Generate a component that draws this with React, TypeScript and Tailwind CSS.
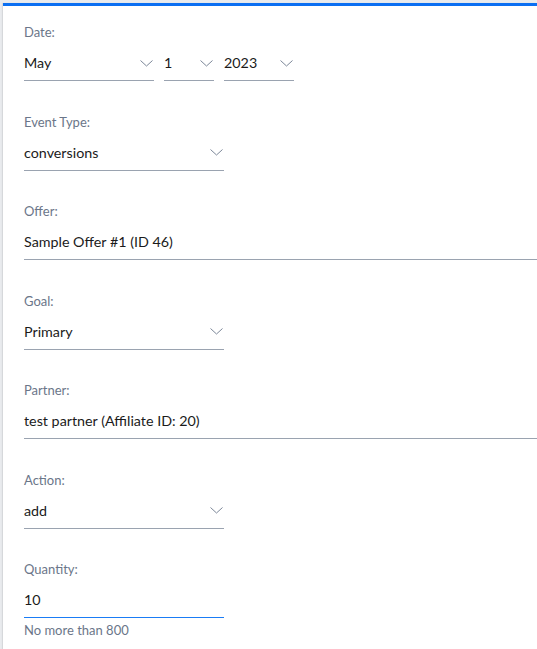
import { ReactNode } from "react";

const Chevron = () => (
  <svg width="13" height="7" viewBox="0 0 13 7" fill="none" className="shrink-0">
    <path d="M0.5 0.5L6.5 6L12.5 0.5" stroke="#7c8798" strokeWidth="1" />
  </svg>
);

const Field = ({ label, children }: { label: string; children: ReactNode }) => (
  <div>
    <div className="h-[18px] text-[13px] leading-[18px] text-[#6b7689]">{label}</div>
    <div className="mt-[5px]">{children}</div>
  </div>
);

const Select = ({ value, width }: { value: string; width: string }) => (
  <div className={`${width} h-[35px] flex items-center justify-between border-b border-[#9aa3b0] pr-[1px]`}>
    <span className="text-[14.3px] text-[#1b1b1b]">{value}</span>
    <Chevron />
  </div>
);

const TextInput = ({ value }: { value: string }) => (
  <div className="w-full h-[35px] flex items-center border-b border-[#9aa3b0]">
    <span className="text-[14.3px] text-[#1b1b1b]">{value}</span>
  </div>
);

export default function App() {
  return (
    <div className="min-h-screen bg-[#e9ebee] pl-[3px] pt-[3px] font-['Lato',sans-serif]">
      <div className="min-h-[646px] bg-white border-t-[3px] border-[#0b6ff2] shadow-[-1px_0_1px_rgba(0,0,0,0.08)] pl-[21px] pt-[17px]">
        <div className="flex flex-col gap-[31.5px]">
          <Field label="Date:">
            <div className="flex gap-[10px]">
              <Select value="May" width="w-[130px]" />
              <Select value="1" width="w-[50px]" />
              <Select value="2023" width="w-[70px]" />
            </div>
          </Field>

          <Field label="Event Type:">
            <Select value="conversions" width="w-[200px]" />
          </Field>

          <Field label="Offer:">
            <TextInput value="Sample Offer #1 (ID 46)" />
          </Field>

          <Field label="Goal:">
            <Select value="Primary" width="w-[200px]" />
          </Field>

          <Field label="Partner:">
            <TextInput value="test partner (Affiliate ID: 20)" />
          </Field>

          <Field label="Action:">
            <Select value="add" width="w-[200px]" />
          </Field>

          <Field label="Quantity:">
            <div className="w-[200px] h-[35px] flex items-center border-b border-[#1a7cf5]">
              <span className="text-[14.3px] text-[#1b1b1b]">10</span>
            </div>
            <div className="mt-[3px] text-[13px] leading-[18px] text-[#6b7689]">No more than 800</div>
          </Field>
        </div>
      </div>
    </div>
  );
}
